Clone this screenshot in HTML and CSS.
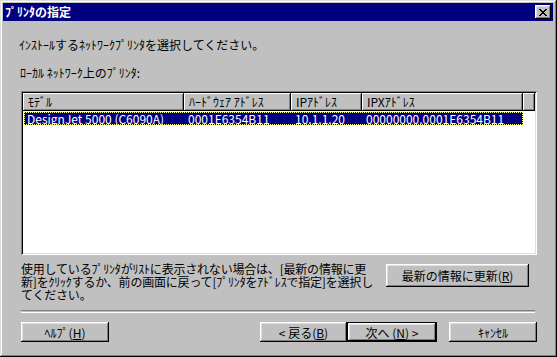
FILE: index.html
```html
<!DOCTYPE html>
<html lang="ja">
<head>
    <meta charset="UTF-8">
    <title>ﾌﾟﾘﾝﾀの指定</title>
    <link rel="stylesheet" href="styles.css">
</head>
<body>
    <div class="window">
        <div class="titlebar">
            <span class="title">ﾌﾟﾘﾝﾀの指定</span>
            <span class="close">
                <svg width="8" height="7" viewBox="0 0 8 7" shape-rendering="crispEdges">
                    <g fill="#000">
                        <rect x="0" y="0" width="2" height="1"/><rect x="6" y="0" width="2" height="1"/>
                        <rect x="1" y="1" width="2" height="1"/><rect x="5" y="1" width="2" height="1"/>
                        <rect x="2" y="2" width="4" height="1"/>
                        <rect x="3" y="3" width="2" height="1"/>
                        <rect x="2" y="4" width="4" height="1"/>
                        <rect x="1" y="5" width="2" height="1"/><rect x="5" y="5" width="2" height="1"/>
                        <rect x="0" y="6" width="2" height="1"/><rect x="6" y="6" width="2" height="1"/>
                    </g>
                </svg>
            </span>
        </div>

        <div class="content">
            <p class="intro">ｲﾝｽﾄｰﾙするﾈｯﾄﾜｰｸﾌﾟﾘﾝﾀを選択してください。</p>
            <p class="label">ﾛｰｶﾙ ﾈｯﾄﾜｰｸ上のﾌﾟﾘﾝﾀ:</p>

            <div class="listbox">
                <div class="list-header">
                    <div class="col col-model">ﾓﾃﾞﾙ</div>
                    <div class="col col-hw">ﾊｰﾄﾞｳｪｱ ｱﾄﾞﾚｽ</div>
                    <div class="col col-ip">IPｱﾄﾞﾚｽ</div>
                    <div class="col col-ipx">IPXｱﾄﾞﾚｽ</div>
                    <div class="col col-fill"></div>
                </div>
                <div class="list-row selected">
                    <div class="cell col-model">DesignJet 5000 (C6090A)</div>
                    <div class="cell col-hw">0001E6354B11</div>
                    <div class="cell col-ip">10.1.1.20</div>
                    <div class="cell col-ipx">00000000.0001E6354B11</div>
                </div>
            </div>

            <div class="info">
                <p class="info-text">使用しているﾌﾟﾘﾝﾀがﾘｽﾄに表示されない場合は、[最新の情報に更<br>新]をｸﾘｯｸするか、前の画面に戻って[ﾌﾟﾘﾝﾀをｱﾄﾞﾚｽで指定]を選択し<br>てください。</p>
                <button class="btn btn-refresh">最新の情報に更新(<u>R</u>)</button>
            </div>

            <div class="separator"></div>

            <div class="actions">
                <button class="btn btn-help">ﾍﾙﾌﾟ(<u>H</u>)</button>
                <div class="nav-buttons">
                    <button class="btn btn-back">&lt; 戻る(<u>B</u>)</button>
                    <button class="btn btn-next default">次へ (<u>N</u>) &gt;</button>
                    <button class="btn btn-cancel">ｷｬﾝｾﾙ</button>
                </div>
            </div>
        </div>
    </div>
</body>
</html>
```

FILE: styles.css
```css
body {
    margin: 0;
    font-family: "Noto Sans CJK JP", "Noto Sans", sans-serif;
    font-size: 12px;
    color: #000;
    background: #c0c0c0;
}
p {
    margin: 0;
}
.window {
    width: 557px;
    height: 357px;
    box-sizing: border-box;
    padding: 3px 4px 4px 3px;
    background: #c0c0c0;
    box-shadow: inset -1px -1px #000, inset 1px 1px #dfdfdf,
                inset -2px -2px #808080, inset 2px 2px #fff;
}
.titlebar {
    height: 18px;
    background: #000080;
    display: flex;
    align-items: center;
    justify-content: space-between;
    padding: 0 2px 0 2px;
}
.title {
    color: #fff;
    font-weight: bold;
    line-height: 18px;
}
.close {
    width: 16px;
    height: 14px;
    box-sizing: border-box;
    background: #c0c0c0;
    display: flex;
    align-items: center;
    justify-content: center;
    box-shadow: inset -1px -1px #000, inset 1px 1px #fff,
                inset -2px -2px #808080, inset 2px 2px #dfdfdf;
}
.content {
    padding: 16px 16px 0 18px;
}
.intro {
    line-height: 15px;
    margin-left: -2px;
}
.label {
    line-height: 15px;
    margin-top: 13px;
    margin-left: -1px;
}

/* list view */
.listbox {
    margin-top: 11px;
    width: 516px;
    height: 164px;
    box-sizing: border-box;
    padding: 2px;
    background: #fff;
    box-shadow: inset 1px 1px #808080, inset -1px -1px #fff,
                inset 2px 2px #000, inset -2px -2px #dfdfdf;
}
.list-header {
    display: flex;
    height: 18px;
}
.col {
    box-sizing: border-box;
    height: 18px;
    line-height: 17px;
    padding-left: 5px;
    background: #c0c0c0;
    white-space: nowrap;
    box-shadow: inset -1px -1px #000, inset 1px 1px #fff,
                inset -2px -2px #808080;
}
.col-model { width: 161px; }
.col-hw { width: 107px; }
.col-ip { width: 71px; }
.col-ipx { width: 161px; }
.col-fill { flex: 1; padding: 0; }
.list-row {
    display: flex;
    height: 13px;
    margin-top: 1px;
    margin-left: 1px;
    width: 499px;
}
.cell {
    box-sizing: border-box;
    line-height: 13px;
    padding-left: 4px;
    white-space: nowrap;
}
.list-row .col-model { width: 160px; padding-left: 3px; }
.list-row.selected {
    background: #000080;
    color: #fff;
    outline: 1px dotted #ffff80;
    outline-offset: -1px;
}

/* info text + refresh */
.info {
    display: flex;
    justify-content: space-between;
    align-items: flex-start;
    margin-top: 7px;
    height: 39px;
}
.info-text {
    line-height: 13px;
    white-space: nowrap;
    letter-spacing: -0.2px;
}
.btn {
    font-family: inherit;
    font-size: 12px;
    color: #000;
    background: #c0c0c0;
    border: none;
    padding: 0;
    margin: 0;
    box-sizing: border-box;
    box-shadow: inset -1px -1px #000, inset 1px 1px #fff,
                inset -2px -2px #808080, inset 2px 2px #dfdfdf;
}
.btn u {
    text-decoration-thickness: 1px;
    text-underline-offset: 1px;
}
.btn-refresh {
    width: 143px;
    height: 23px;
    margin-top: 2px;
    margin-right: 8px;
}

.separator {
    margin-top: 9px;
    height: 1px;
    border-top: 1px solid #808080;
    border-bottom: 1px solid #fff;
    width: 514px;
}

/* bottom buttons */
.actions {
    display: flex;
    justify-content: space-between;
    margin-top: 9px;
}
.nav-buttons {
    display: flex;
}
.btn-help,
.btn-back,
.btn-cancel {
    width: 88px;
    height: 20px;
}
.btn-back {
    width: 87px;
}
.btn-next {
    width: 90px;
    height: 20px;
    margin-right: 12px;
}
.btn.default {
    border: 1px solid #000;
}
```
